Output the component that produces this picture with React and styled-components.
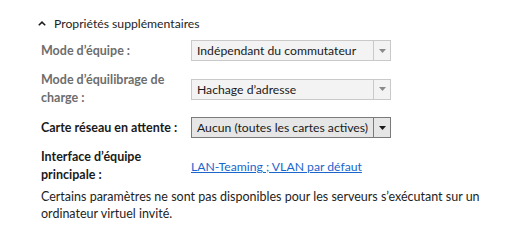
import React from "react";
import styled, { createGlobalStyle } from "styled-components";

const Global = createGlobalStyle`
  html, body { margin: 0; padding: 0; background: #ffffff; }
  body { font-family: "Lato", "Liberation Sans", sans-serif; font-size: 12.5px; color: #1e1e1e; }
`;

const Page = styled.div`
  width: 510px;
  height: 240px;
  padding: 14px 0 0 38px;
  box-sizing: border-box;
`;

const Header = styled.div`
  display: flex;
  align-items: center;
  gap: 8px;
  height: 18px;
  color: #1e1e1e;
  font-size: 12.2px;
`;

const Form = styled.div`
  display: grid;
  grid-template-columns: 150px 200px;
  column-gap: 0;
  row-gap: 10px;
  align-items: center;
  margin: 8px 0 0 3px;
`;

const Label = styled.div`
  font-weight: 700;
  line-height: 18px;
  color: ${(p) => (p.$disabled ? "#6d6d6d" : "#1a1a1a")};
  padding-right: 8px;
`;

const Select = styled.div`
  display: flex;
  height: 21px;
  box-sizing: border-box;
  border: 1px solid ${(p) => (p.$disabled ? "#c9c9c9" : "#7a7a7a")};
  background: ${(p) => (p.$disabled ? "#f3f3f3" : "#e6e6e6")};
  color: #1a1a1a;
`;

const SelectText = styled.div`
  flex: 1;
  padding-left: 5px;
  line-height: 19px;
  font-size: 12.2px;
  white-space: nowrap;
  overflow: hidden;
`;

const Arrow = styled.div`
  width: 16px;
  display: flex;
  align-items: center;
  justify-content: center;
  border-left: 1px solid ${(p) => (p.$disabled ? "#c9c9c9" : "#7a7a7a")};
`;

const Link = styled.a`
  color: #1a66cc;
  text-decoration: underline;
  cursor: pointer;
  white-space: nowrap;
  font-size: 12.2px;
`;

const Note = styled.p`
  margin: 4px 0 0 3px;
  line-height: 17px;
  width: 440px;
`;

function Triangle({ color }) {
  return (
    <svg width="7" height="4" viewBox="0 0 7 4">
      <polygon points="0,0 7,0 3.5,4" fill={color} />
    </svg>
  );
}

function Dropdown({ value, disabled }) {
  return (
    <Select $disabled={disabled}>
      <SelectText>{value}</SelectText>
      <Arrow $disabled={disabled}>
        <Triangle color={disabled ? "#8a8a8a" : "#1a1a1a"} />
      </Arrow>
    </Select>
  );
}

export default function App() {
  return (
    <>
      <Global />
      <Page>
        <Header>
          <svg width="8" height="5" viewBox="0 0 8 5">
            <polyline points="0.8,4.3 4,1.2 7.2,4.3" fill="none" stroke="#1e1e1e" strokeWidth="1.6" />
          </svg>
          <span>Propriétés supplémentaires</span>
        </Header>
        <Form>
          <Label $disabled>Mode d’équipe :</Label>
          <Dropdown value="Indépendant du commutateur" disabled />
          <Label $disabled>Mode d’équilibrage de charge :</Label>
          <Dropdown value="Hachage d’adresse" disabled />
          <Label>Carte réseau en attente :</Label>
          <Dropdown value="Aucun (toutes les cartes actives)" />
          <Label>Interface d’équipe principale :</Label>
          <div>
            <Link>LAN-Teaming ; VLAN par défaut</Link>
          </div>
        </Form>
        <Note>
          Certains paramètres ne sont pas disponibles pour les serveurs s’exécutant sur un ordinateur virtuel invité.
        </Note>
      </Page>
    </>
  );
}
